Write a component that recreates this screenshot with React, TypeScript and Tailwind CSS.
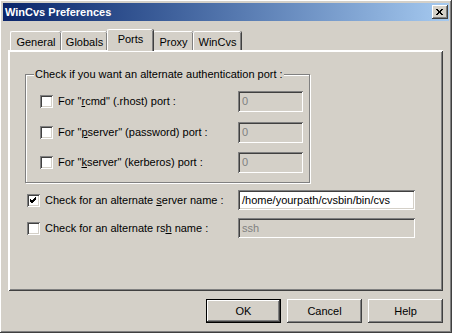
const raised =
  "shadow-[inset_-1px_-1px_#404040,inset_1px_1px_#ffffff,inset_-2px_-2px_#808080,inset_2px_2px_#d4d0c8]";
const sunken =
  "shadow-[inset_1px_1px_#808080,inset_-1px_-1px_#ffffff,inset_2px_2px_#404040,inset_-2px_-2px_#d4d0c8]";

function Check({ checked }: { checked?: boolean }) {
  return (
    <div className={`flex h-[13px] w-[13px] shrink-0 items-center justify-center bg-white ${sunken}`}>
      {checked && (
        <svg width="7" height="7" viewBox="0 0 7 7">
          <path d="M0 2 L2 4 L6 0 M0 3 L2 5 L6 1 M0 4 L2 6 L6 2" stroke="#000" strokeWidth="1" fill="none" shapeRendering="crispEdges" />
        </svg>
      )}
    </div>
  );
}

function Field({ value, disabled, w, h }: { value: string; disabled?: boolean; w: string; h: string }) {
  return (
    <div
      className={`${w} ${h} flex items-center pl-[4px] ${sunken} ${
        disabled ? "bg-[#d4d0c8] text-[#808080]" : "bg-white text-black"
      }`}
    >
      {value}
    </div>
  );
}

function Btn({ label, def }: { label: string; def?: boolean }) {
  return (
    <div className={`h-[24px] w-[75px] ${def ? "border border-black" : ""}`}>
      <div className={`flex h-full w-full items-center justify-center ${raised}`}>{label}</div>
    </div>
  );
}

const tabs = [
  { name: "General", w: "w-[51px]" },
  { name: "Globals", w: "w-[46px]" },
  { name: "Ports", w: "w-[46px]", active: true },
  { name: "Proxy", w: "w-[40px]" },
  { name: "WinCvs", w: "w-[48px]" },
];

const ports = [
  { pre: 'For "', key: "r", post: 'cmd" (.rhost) port :' },
  { pre: 'For "', key: "p", post: 'server" (password) port :' },
  { pre: 'For "', key: "k", post: 'server" (kerberos) port :' },
];

export default function App() {
  return (
    <div
      className={`flex h-[333px] w-[452px] flex-col bg-[#d4d0c8] p-[3px] text-[11px] leading-[13px] text-black ${raised}`}
      style={{ fontFamily: '"Liberation Sans", Arial, sans-serif' }}
    >
      <div className="flex h-[18px] items-center justify-between bg-gradient-to-r from-[#0a246a] to-[#a6caf0] pl-[2px] pr-[1px]">
        <span className="text-[11px] font-bold text-white">WinCvs Preferences</span>
        <div className={`flex h-[14px] w-[16px] items-center justify-center bg-[#d4d0c8] ${raised}`}>
          <svg width="8" height="7" viewBox="0 0 8 7">
            <path d="M0 0 L6 6 M1 0 L7 6 M6 0 L0 6 M7 0 L1 6" stroke="#000" strokeWidth="1" fill="none" />
          </svg>
        </div>
      </div>

      <div className="pl-[5px] pr-[6px] pt-[8px]">
        <div className="flex h-[21px] items-end pl-[2px]">
          {tabs.map((t) =>
            t.active ? (
              <div
                key={t.name}
                className={`${t.w} relative z-10 -mb-[1px] flex h-[22px] items-start justify-center rounded-t-[2px] border-l border-t border-white bg-[#d4d0c8] pt-[3px] shadow-[inset_-1px_0_#808080,-1px_0_#ffffff] [box-shadow:inset_-1px_0_#808080,1px_0_#404040]`}
              >
                {t.name}
              </div>
            ) : (
              <div
                key={t.name}
                className={`${t.w} flex h-[19px] items-start justify-center rounded-t-[2px] border-l border-t border-white pt-[4px] [box-shadow:inset_-1px_0_#808080,1px_0_#404040]`}
              >
                {t.name}
              </div>
            )
          )}
        </div>

        <div className={`h-[241px] w-[435px] ${raised} border-l border-t border-white`}>
          <div className="relative ml-[16px] mt-[23px] h-[109px] w-[285px] border border-[#808080] shadow-[inset_1px_1px_#ffffff,1px_1px_#ffffff]">
            <span className="absolute -top-[7px] left-[8px] bg-[#d4d0c8] px-[1px]">
              Check if you want an alternate authentication port :
            </span>
            <div className="flex flex-col gap-[9px] pl-[14px] pt-[16px]">
              {ports.map((p, i) => (
                <div key={p.key} className={`flex h-[21px] items-center ${i === 1 ? "mt-[1px]" : ""}`}>
                  <div className="flex w-[198px] items-center">
                    <Check />
                    <span className="ml-[5px]">
                      {p.pre}
                      <u>{p.key}</u>
                      {p.post}
                    </span>
                  </div>
                  <Field value="0" disabled w="w-[65px]" h="h-[21px]" />
                </div>
              ))}
            </div>
          </div>

          <div className="flex flex-col gap-[8px] pl-[18px] pt-[7px]">
            <div className="flex h-[20px] items-center">
              <div className="flex w-[211px] items-center">
                <Check checked />
                <span className="ml-[5px]">
                  Check for an alternate <u>s</u>erver name :
                </span>
              </div>
              <Field value="/home/yourpath/cvsbin/bin/cvs" w="w-[177px]" h="h-[20px]" />
            </div>
            <div className="flex h-[20px] items-center">
              <div className="flex w-[211px] items-center">
                <Check />
                <span className="ml-[5px]">
                  Check for an alternate rs<u>h</u> name :
                </span>
              </div>
              <Field value="ssh" disabled w="w-[177px]" h="h-[20px]" />
            </div>
          </div>
        </div>

        <div className="mt-[8px] flex justify-end gap-[6px]">
          <Btn label="OK" def />
          <Btn label="Cancel" />
          <Btn label="Help" />
        </div>
      </div>
    </div>
  );
}
